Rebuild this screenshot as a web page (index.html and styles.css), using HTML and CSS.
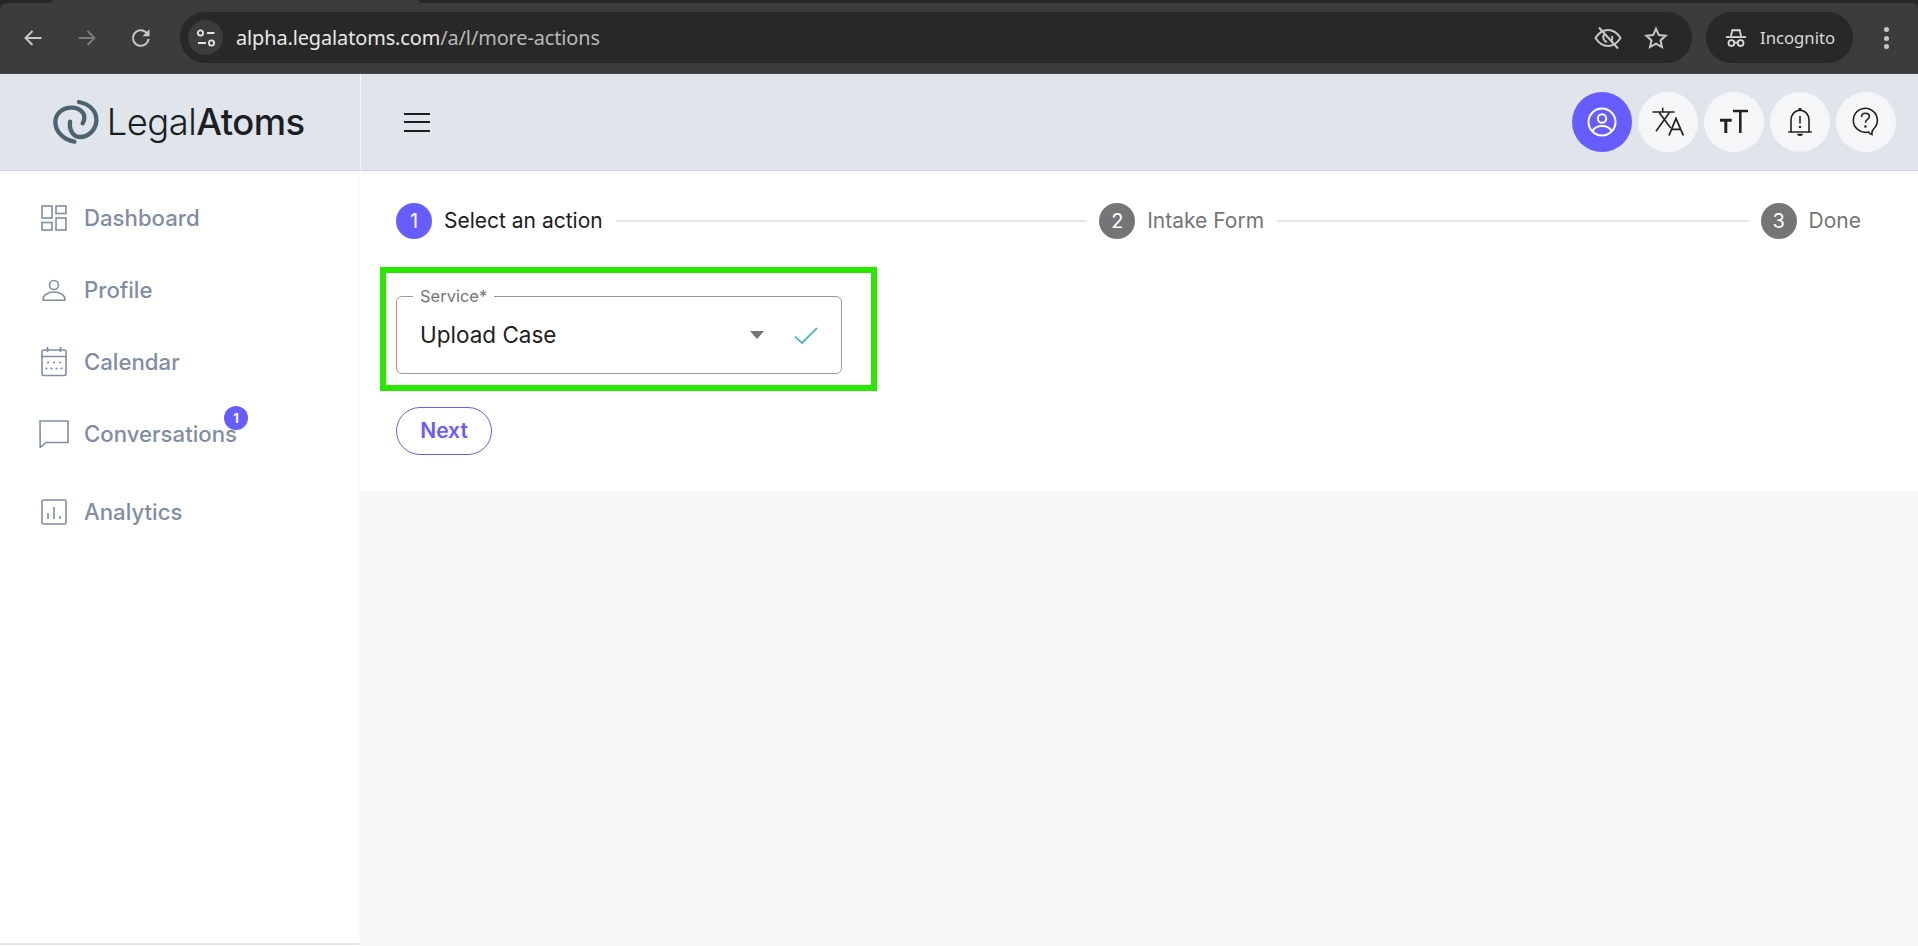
FILE: index.html
```html
<!DOCTYPE html>
<html lang="en">
<head>
<meta charset="utf-8">
<title>LegalAtoms</title>
<link rel="stylesheet" href="styles.css">
</head>
<body>
<div class="browser">
  <div class="tabstrip"><div class="tab-edge"></div></div>
  <div class="toolbar">
    <div class="nav-icons">
      <svg class="nav-icon" viewBox="0 0 20 20"><path d="M18.500 10H2.500M9.500 3 2.500 10l7 7"/></svg>
      <svg class="nav-icon dim" viewBox="0 0 20 20"><path d="M1.500 10h16M10.500 3l7 7-7 7"/></svg>
      <svg class="nav-icon" viewBox="0 0 20 20"><path d="M17.500 11A7.800 7.800 0 1 1 14.700 4L17 6.200"/><path class="head" d="M18.500 1.200v7h-7z"/></svg>
    </div>
    <div class="omnibox">
      <span class="tune"><svg viewBox="0 0 20 20"><circle cx="4.500" cy="5" r="2.600"/><path d="M11 5h7.500M2 15h8"/><circle cx="15.500" cy="15" r="2.600"/></svg></span>
      <span class="url"><span class="url-host">alpha.legalatoms.com</span>/a/l/more-actions</span>
      <svg class="omni-icon eye" viewBox="0 0 28 28"><path d="M1.500 14C5 8.500 9.500 6 14 6s9 2.500 12.500 8c-3.500 5.500-8 8-12.500 8S5 19.500 1.500 14Z"/><path d="M10 10.500c-1.500 3-.5 6.500 3 7.500M18 12c1 2.500 0 4-.5 5"/><path class="slash" d="M5 3.500l19 21"/></svg>
      <svg class="omni-icon star" viewBox="0 0 24 24"><path d="M12 2.800l2.800 6.300 6.800.700-5.100 4.600 1.500 6.700-6-3.500-6 3.500 1.500-6.700-5.100-4.600 6.800-.700z"/></svg>
    </div>
    <div class="incognito">
      <svg viewBox="0 0 24 24"><path d="M6.500 10l1.500-6.500h8l1.500 6.500"/><path d="M1 11h22"/><circle cx="7" cy="17.500" r="3.200"/><circle cx="17" cy="17.500" r="3.200"/><path d="M10.200 17h3.600"/></svg>
      <span>Incognito</span>
    </div>
    <div class="kebab"><i></i><i></i><i></i></div>
  </div>
</div>

<header class="app-header">
  <div class="brand">
    <svg class="logo" viewBox="28 22 140 136"><path d="M106 31C140 38 160 60 158 88C156 115 135 136 108 136C88 136 76 115 79 90"/><path d="M92 150C60 145 35 120 35 92C35 68 52 50 80 48C105 46 122 60 122 78C122 85 120 90 117 95"/></svg>
    <span class="brand-name">Legal<b>Atoms</b></span>
  </div>
  <div class="header-main">
    <button class="hamburger" aria-label="Menu"><i></i><i></i><i></i></button>
    <div class="header-actions">
      <span class="round active"><svg viewBox="0 0 32 32"><circle cx="16" cy="16" r="13.500"/><circle cx="16" cy="12.500" r="4.200"/><path d="M6.500 25c2-3.500 5.500-5 9.500-5s7.500 1.500 9.500 5"/></svg></span>
      <span class="round"><svg viewBox="0 0 32 32"><path d="M.5 6h22M10.700 1.700V6M4 25.300 17.300 6.700M7.300 6.700 18.700 22"/><path class="thick" d="M17 29.500l7-17 7.300 17M19.300 23.300h9.400"/></svg></span>
      <span class="round"><svg viewBox="0 0 32 32"><path class="bold" d="M2 14.300h11.700M7.800 14.300v12.700"/><path class="mid" d="M15 5h15M22.300 5v22"/></svg></span>
      <span class="round"><svg viewBox="0 0 32 32"><path d="M4.300 26h23.400M7 26V14c0-5.500 3.800-9.700 9-9.700s9 4.200 9 9.700v12"/><circle class="fill" cx="16" cy="3.500" r="1.700"/><path class="fill" d="M13 27.800h6c-.4 1.600-1.600 2.500-3 2.500s-2.600-.9-3-2.500Z"/><path d="M16 10v7.500"/><circle class="fill" cx="16" cy="21" r="1.200"/></svg></span>
      <span class="round"><svg viewBox="0 0 32 32"><path d="M23.800 22.800A12 12 0 1 0 18.400 25.900C19 27 20 28 22 28.500C21.500 27 22 25 23.800 22.800Z"/><path d="M11.500 11c0-2.500 1.800-3.800 3.900-3.800 2.300 0 4 1.300 4 3.300 0 3-4 3-4 6.300"/><circle class="fill" cx="15.400" cy="20.500" r="1.200"/></svg></span>
    </div>
  </div>
</header>

<div class="layout">
  <nav class="sidebar">
    <a class="nav-item"><svg class="nav-svg" viewBox="0 0 26 26"><rect x="1" y="1" width="10" height="12"/><rect x="15" y="1" width="10" height="7.500"/><rect x="1" y="17.500" width="10" height="7.500"/><rect x="15" y="13" width="10" height="12"/></svg><span class="nav-text">Dashboard</span></a>
    <a class="nav-item"><svg class="nav-svg" viewBox="0 0 26 26"><circle cx="13" cy="8" r="4.500"/><path d="M2 22.500c0-4.500 5-7.500 11-7.500s11 3 11 7.500c0 .5-.4.700-1 .7H3c-.6 0-1-.2-1-.7Z"/></svg><span class="nav-text">Profile</span></a>
    <a class="nav-item"><svg class="nav-svg tall" viewBox="0 0 26 30"><rect x="1" y="3" width="24" height="25.500" rx="1.500"/><path d="M1 9.500h24M6.500 0v5M19.500 0v5"/><path class="dots" d="M7 15.500h.01M13 15.500h.01M19 15.500h.01M5.500 21.500h.01M10.500 21.500h.01M15.500 21.500h.01M20.500 21.500h.01"/></svg><span class="nav-text">Calendar</span></a>
    <a class="nav-item"><svg class="nav-svg wide" viewBox="0 0 30 28"><path d="M1 1h28v21.500H7L1.200 27.500Z"/></svg><span class="nav-text">Conversations</span><span class="badge">1</span></a>
    <a class="nav-item last"><svg class="nav-svg" viewBox="0 0 26 26"><rect x="1" y="1" width="24" height="24" rx="1.500"/><path d="M7 14v6M13 8v12M19 17v3"/></svg><span class="nav-text">Analytics</span></a>
  </nav>

  <main class="content">
    <section class="panel">
      <ol class="stepper">
        <li class="step current"><span class="step-num">1</span><span class="step-label">Select an action</span></li>
        <li class="step-line"></li>
        <li class="step"><span class="step-num">2</span><span class="step-label">Intake Form</span></li>
        <li class="step-line"></li>
        <li class="step"><span class="step-num">3</span><span class="step-label">Done</span></li>
      </ol>
      <div class="highlight">
        <div class="field">
          <span class="field-label">Service*</span>
          <span class="field-value">Upload Case</span>
          <span class="caret"></span>
          <svg class="check" viewBox="0 0 24 17"><path d="M1 9.500 8 16 23 1"/></svg>
        </div>
      </div>
      <button class="next">Next</button>
    </section>
  </main>
</div>
</body>
</html>
```

FILE: styles.css
```css
* { box-sizing: border-box; }
html, body { height: 100%; }
body {
  margin: 0;
  display: flex;
  flex-direction: column;
  height: 946px;
  overflow: hidden;
  background: #fff;
  font-family: Inter, "Liberation Sans", sans-serif;
}

/* browser chrome */
.browser { flex: none; height: 74px; background: #262626; border-bottom: 1px solid #4a4a4a; display: flex; flex-direction: column; }
.tabstrip { height: 3px; flex: none; }
.tab-edge { margin-left: 51px; width: 369px; height: 3px; background: #3c3c3c; border-radius: 4px 4px 0 0; }
.toolbar { flex: 1; background: #3c3c3c; display: flex; align-items: center; padding: 0 0 0 23px; border-radius: 6px 6px 0 0; }
.nav-icons { display: flex; gap: 34px; width: 157px; flex: none; }
.nav-icon { width: 20px; height: 20px; fill: none; stroke: #c7c7c7; stroke-width: 2; }
.nav-icon.dim { stroke: #7c7c7c; }
.nav-icon .head { fill: #c7c7c7; stroke: none; }
.omnibox { width: 1512px; height: 51px; margin-top: -1px; background: #282828; border-radius: 26px; display: flex; align-items: center; padding: 0 24px 0 8px; flex: none; }
.tune { width: 35px; height: 35px; border-radius: 50%; background: #3c3c3c; display: flex; align-items: center; justify-content: center; flex: none; }
.tune svg { width: 20px; height: 20px; fill: none; stroke: #e3e3e3; stroke-width: 1.800; }
.url { margin-left: 13px; flex: 1; font: 400 19.900px "Noto Sans", Roboto, sans-serif; color: #b9b9b9; letter-spacing: -.1px; }
.url-host { color: #e8e8e8; }
.omni-icon { fill: none; stroke: #c7c7c7; stroke-width: 2; flex: none; }
.eye { width: 28px; height: 28px; margin-right: 22px; }
.star { width: 24px; height: 24px; }
.incognito { width: 147px; height: 51px; margin-top: -1px; margin-left: 14px; border-radius: 26px; background: #282828; display: flex; align-items: center; gap: 13px; padding-left: 19px; color: #d9d9d9; font: 400 16.700px "Noto Sans", Roboto, sans-serif; flex: none; }
.incognito svg { width: 22px; height: 22px; fill: none; stroke: #d8d8d8; stroke-width: 2; flex: none; }
.kebab { margin-left: 31px; display: flex; flex-direction: column; gap: 3.500px; }
.kebab i { width: 5px; height: 5px; border-radius: 50%; background: #c7c7c7; display: block; }

/* app header */
.app-header { flex: none; height: 97px; display: flex; background: #e0e5ec; border-bottom: 1px solid #cfd2d6; }
.brand { width: 361px; flex: none; border-right: 1px solid #f4f6f8; display: flex; align-items: center; padding-left: 53px; gap: 7px; }
.logo { width: 46.700px; height: 45.300px; fill: none; stroke: #4d6470; stroke-width: 13; stroke-linecap: round; flex: none; }
.brand-name { font-size: 36.400px; font-weight: 300; color: #1b1f24; letter-spacing: -.5px; }
.brand-name b { font-weight: 500; }
.header-main { flex: 1; display: flex; align-items: center; justify-content: space-between; padding: 0 22px 0 43px; }
.hamburger { background: none; border: 0; padding: 0; width: 26px; display: flex; flex-direction: column; gap: 6.500px; }
.hamburger i { display: block; height: 2px; background: #1d1d1d; }
.header-actions { display: flex; gap: 6px; }
.round { width: 60px; height: 60px; border-radius: 50%; background: #f5f6f8; display: flex; align-items: center; justify-content: center; }
.round svg { width: 32px; height: 32px; fill: none; stroke: #222; stroke-width: 1.600; }
.round.active { background: #675dff; }
.round.active svg { stroke: #fff; stroke-width: 2; }
.round .fill { fill: #222; stroke: none; }
.round .thick { stroke-width: 1.800; }
.round .bold { stroke-width: 3; }
.round .mid { stroke-width: 2.600; }

/* body */
.layout { flex: 1; display: flex; min-height: 0; }
.sidebar { width: 360px; flex: none; background: #fff; border-right: 1px solid #f8f8f9; border-bottom: 2px solid #e4e4ea; margin-bottom: 1px; padding-top: 11px; display: flex; flex-direction: column; }
.nav-item { height: 72px; display: flex; align-items: center; padding-left: 41px; color: #7f8ea3; font-size: 22.200px; font-weight: 500; position: relative; gap: 17px; }
.nav-item.last { margin-top: 6px; }
.nav-text { margin-bottom: 2px; }
.nav-svg { width: 26px; height: 26px; fill: none; stroke: #7f8ea3; stroke-width: 1.600; flex: none; }
.nav-svg.tall { height: 30px; }
.nav-svg.wide { width: 30px; height: 28px; margin: 0 -2px; }
.nav-svg .dots { stroke-width: 2.200; stroke-linecap: round; }
.badge { position: absolute; left: 224px; top: 8px; width: 24px; height: 24px; border-radius: 50%; background: #675dff; color: #fff; font-size: 13px; font-weight: 700; display: flex; align-items: center; justify-content: center; }
.content { flex: 1; background: #f6f7f9; min-width: 0; }
.panel { background: #fff; padding: 32px 57px 36px 36px; }
.stepper { list-style: none; margin: 0; padding: 0; display: flex; align-items: center; }
.step { display: flex; align-items: center; gap: 12px; flex: none; }
.step-num { width: 36px; height: 36px; border-radius: 50%; background: #757575; color: #fff; font-size: 20px; display: flex; align-items: center; justify-content: center; }
.step-label { font-size: 21px; color: #757575; margin-bottom: 2px; }
.step.current .step-num { background: #675dff; }
.step.current .step-label { color: #1c1c1c; }
.step-line { flex: 1; height: 2px; background: #e6e6e6; margin: 0 12px 0 13px; }
.highlight { width: 497px; height: 124px; margin: 28px 0 16px -16px; border: 6px solid #28e800; padding: 23px 29px 12px 10px; }
.field { position: relative; height: 78px; border: 1px solid #9a9a9a; border-radius: 6px; display: flex; align-items: center; padding: 0 23px 0 23px; }
.field-label { position: absolute; left: 16px; top: -11px; padding: 0 7px; background: #fff; color: #757575; font-size: 16.500px; line-height: 20px; }
.field-value { flex: 1; font-size: 22.500px; color: #212121; margin-bottom: 2px; }
.caret { width: 0; height: 0; border-left: 7.500px solid transparent; border-right: 7.500px solid transparent; border-top: 8px solid #757575; margin-right: 30px; }
.check { width: 24px; height: 17px; fill: none; stroke: #2fb3b8; stroke-width: 1.700; }
.next { display: block; width: 96px; height: 48px; border: 1px solid #675dff; border-radius: 24px; background: #fff; color: #675dff; font: 600 21px Inter, sans-serif; padding: 0 0 2px; }
```
